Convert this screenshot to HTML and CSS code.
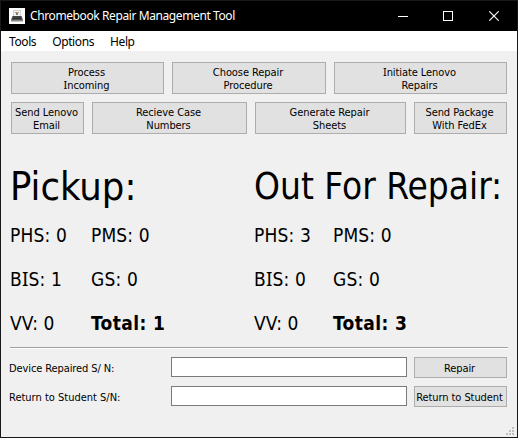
FILE: index.html
```html
<!DOCTYPE html>
<html lang="en">
<head>
<meta charset="utf-8">
<title>Chromebook Repair Management Tool</title>
<link rel="stylesheet" href="styles.css">
</head>
<body>
<div class="window">
  <header class="titlebar">
    <svg class="app-icon" width="16" height="16" viewBox="0 0 16 16">
      <rect width="16" height="16" fill="#fff"/>
      <path d="M4 2h8v7H4z" fill="#d2d2d2"/>
      <path d="M5 3h6v5H5z" fill="#f1f1f1"/>
      <path d="M6 4h2v1H6z" fill="#d98278"/>
      <path d="M8 4h2v1H8z" fill="#85b58b"/>
      <path d="M7 5h2v2H7z" fill="#75847b"/>
      <path d="M3.5 8h9l1.500 4H2z" fill="#555"/>
      <path d="M4 9h8M3.500 10.500h9" stroke="#303030"/>
      <path d="M2 12h12v1.500H2z" fill="#888"/>
    </svg>
    <h1 class="title">Chromebook Repair Management Tool</h1>
    <svg class="controls" width="101" height="10" viewBox="0 0 101 10" fill="none" stroke="#fff">
      <path d="M0 5.500h10M45.500.5h9v9h-9z" shape-rendering="crispEdges"/>
      <path d="M91.300.3l9.400 9.400M100.700.3l-9.400 9.400" stroke-width="1.100"/>
    </svg>
  </header>
  <nav class="menu"><span>Tools</span><span>Options</span><span>Help</span></nav>
  <main class="content">
    <div class="row row-top">
      <button><span>Process<br><span class="serif-i">I</span>ncoming</span></button>
      <button><span>Choose Repair<br>Procedure</span></button>
      <button><span><span class="serif-i">I</span>nitiate Lenovo<br>Repairs</span></button>
    </div>
    <div class="row row-second">
      <button><span>Send Lenovo<br>Email</span></button>
      <button><span>Recieve Case<br>Numbers</span></button>
      <button><span>Generate Repair<br>Sheets</span></button>
      <button><span>Send Package<br>With FedEx</span></button>
    </div>
    <div class="stats">
      <section class="pickup">
        <h2>Pickup:</h2>
        <div class="counts">
          <span>PHS: 0</span><span>PMS: 0</span>
          <span>B<span class="serif-i">I</span>S: 1</span><span>GS: 0</span>
          <span>VV: 0</span><b>Total: 1</b>
        </div>
      </section>
      <section class="repair">
        <h2>Out For Repair:</h2>
        <div class="counts">
          <span>PHS: 3</span><span>PMS: 0</span>
          <span>B<span class="serif-i">I</span>S: 0</span><span>GS: 0</span>
          <span>VV: 0</span><b>Total: 3</b>
        </div>
      </section>
    </div>
    <div class="rule"></div>
    <div class="form">
      <label class="repaired" for="repaired">Device Repaired S/ N:</label><input id="repaired" type="text"><button>Repair</button>
      <label for="returned">Return to Student S/N:</label><input id="returned" type="text"><button>Return to Student</button>
    </div>
  </main>
  <svg class="grip" width="8" height="8" viewBox="0 0 8 8" fill="#bfbfbf">
    <path d="M6 0h2v2H6zM3 3h2v2H3zM6 3h2v2H6zM0 6h2v2H0zM3 6h2v2H3zM6 6h2v2H6z"/>
  </svg>
</div>
</body>
</html>
```
FILE: styles.css
```css
* { box-sizing: border-box; }
body { margin: 0; font-family: "DejaVu Sans Condensed", "DejaVu Sans", sans-serif; font-stretch: condensed; color: #000; }
h1, h2 { margin: 0; font-weight: 400; }
.window {
  position: relative;
  width: 518px;
  height: 438px;
  border: 1px solid #181818;
  background: #f0f0f0;
  overflow: hidden;
}
.titlebar {
  display: flex;
  align-items: center;
  height: 30px;
  padding: 0 18px 0 8px;
  background: #000;
  color: #fff;
}
.title, .menu { font-family: "Noto Sans", sans-serif; font-size: 12px; letter-spacing: -0.4px; }
.title { margin-left: 5px; line-height: 16px; white-space: nowrap; }
.controls { margin-left: auto; margin-top: -1px; }
.menu { display: flex; gap: 16px; height: 20px; padding-left: 8px; background: #fff; line-height: 21px; }
.content { padding: 11px 10px 0; }
.row { display: grid; column-gap: 8px; height: 32px; }
.row-top { grid-template-columns: 153px 154px 173px; }
.row-second { grid-template-columns: 73px 155px 151px 93px; margin-top: 8px; }
button {
  display: flex;
  align-items: center;
  justify-content: center;
  padding: 2px 2px 0 0;
  border: 1px solid #adadad;
  border-radius: 0;
  background: #e1e1e1;
  color: #000;
  font-family: inherit;
  font-stretch: inherit;
  font-size: 11px;
  letter-spacing: -0.08px;
  line-height: 13px;
  text-align: center;
  white-space: nowrap;
}
.serif-i { font-family: "Noto Sans", sans-serif; line-height: 1px; }
.stats { display: grid; grid-template-columns: 244px 254px; height: 213px; margin-left: -1px; padding-top: 24px; }
h2 { height: 55px; line-height: 57px; white-space: nowrap; }
.pickup h2 { font-size: 39.5px; }
.repair h2 { font-size: 36.7px; }
.counts { display: grid; grid-template-rows: repeat(3, 44px); font-size: 19px; letter-spacing: 0.15px; line-height: 44px; white-space: nowrap; }
.counts b { letter-spacing: 0.4px; }
.pickup .counts { grid-template-columns: 81px 1fr; }
.repair .counts { grid-template-columns: 79px 1fr; }
.rule { height: 2px; margin: 0 -1px; border-top: 1px solid #a0a0a0; border-bottom: 1px solid #fff; }
.form { display: grid; grid-template-columns: 162px 236px 93px; grid-template-rows: 21px 21px; row-gap: 8px; margin: 8px 0 0 -2px; }
.form button { margin-left: 7px; width: 93px; }
.form label { font-size: 11px; line-height: 23px; white-space: nowrap; }
.form .repaired { letter-spacing: -0.1px; }
.form input { width: 236px; height: 20px; padding: 0 3px; border: 1px solid #7a7a7a; background: #fff; font: 11px "Noto Sans", sans-serif; }
.grip { position: absolute; right: 3px; bottom: 2px; }
```
